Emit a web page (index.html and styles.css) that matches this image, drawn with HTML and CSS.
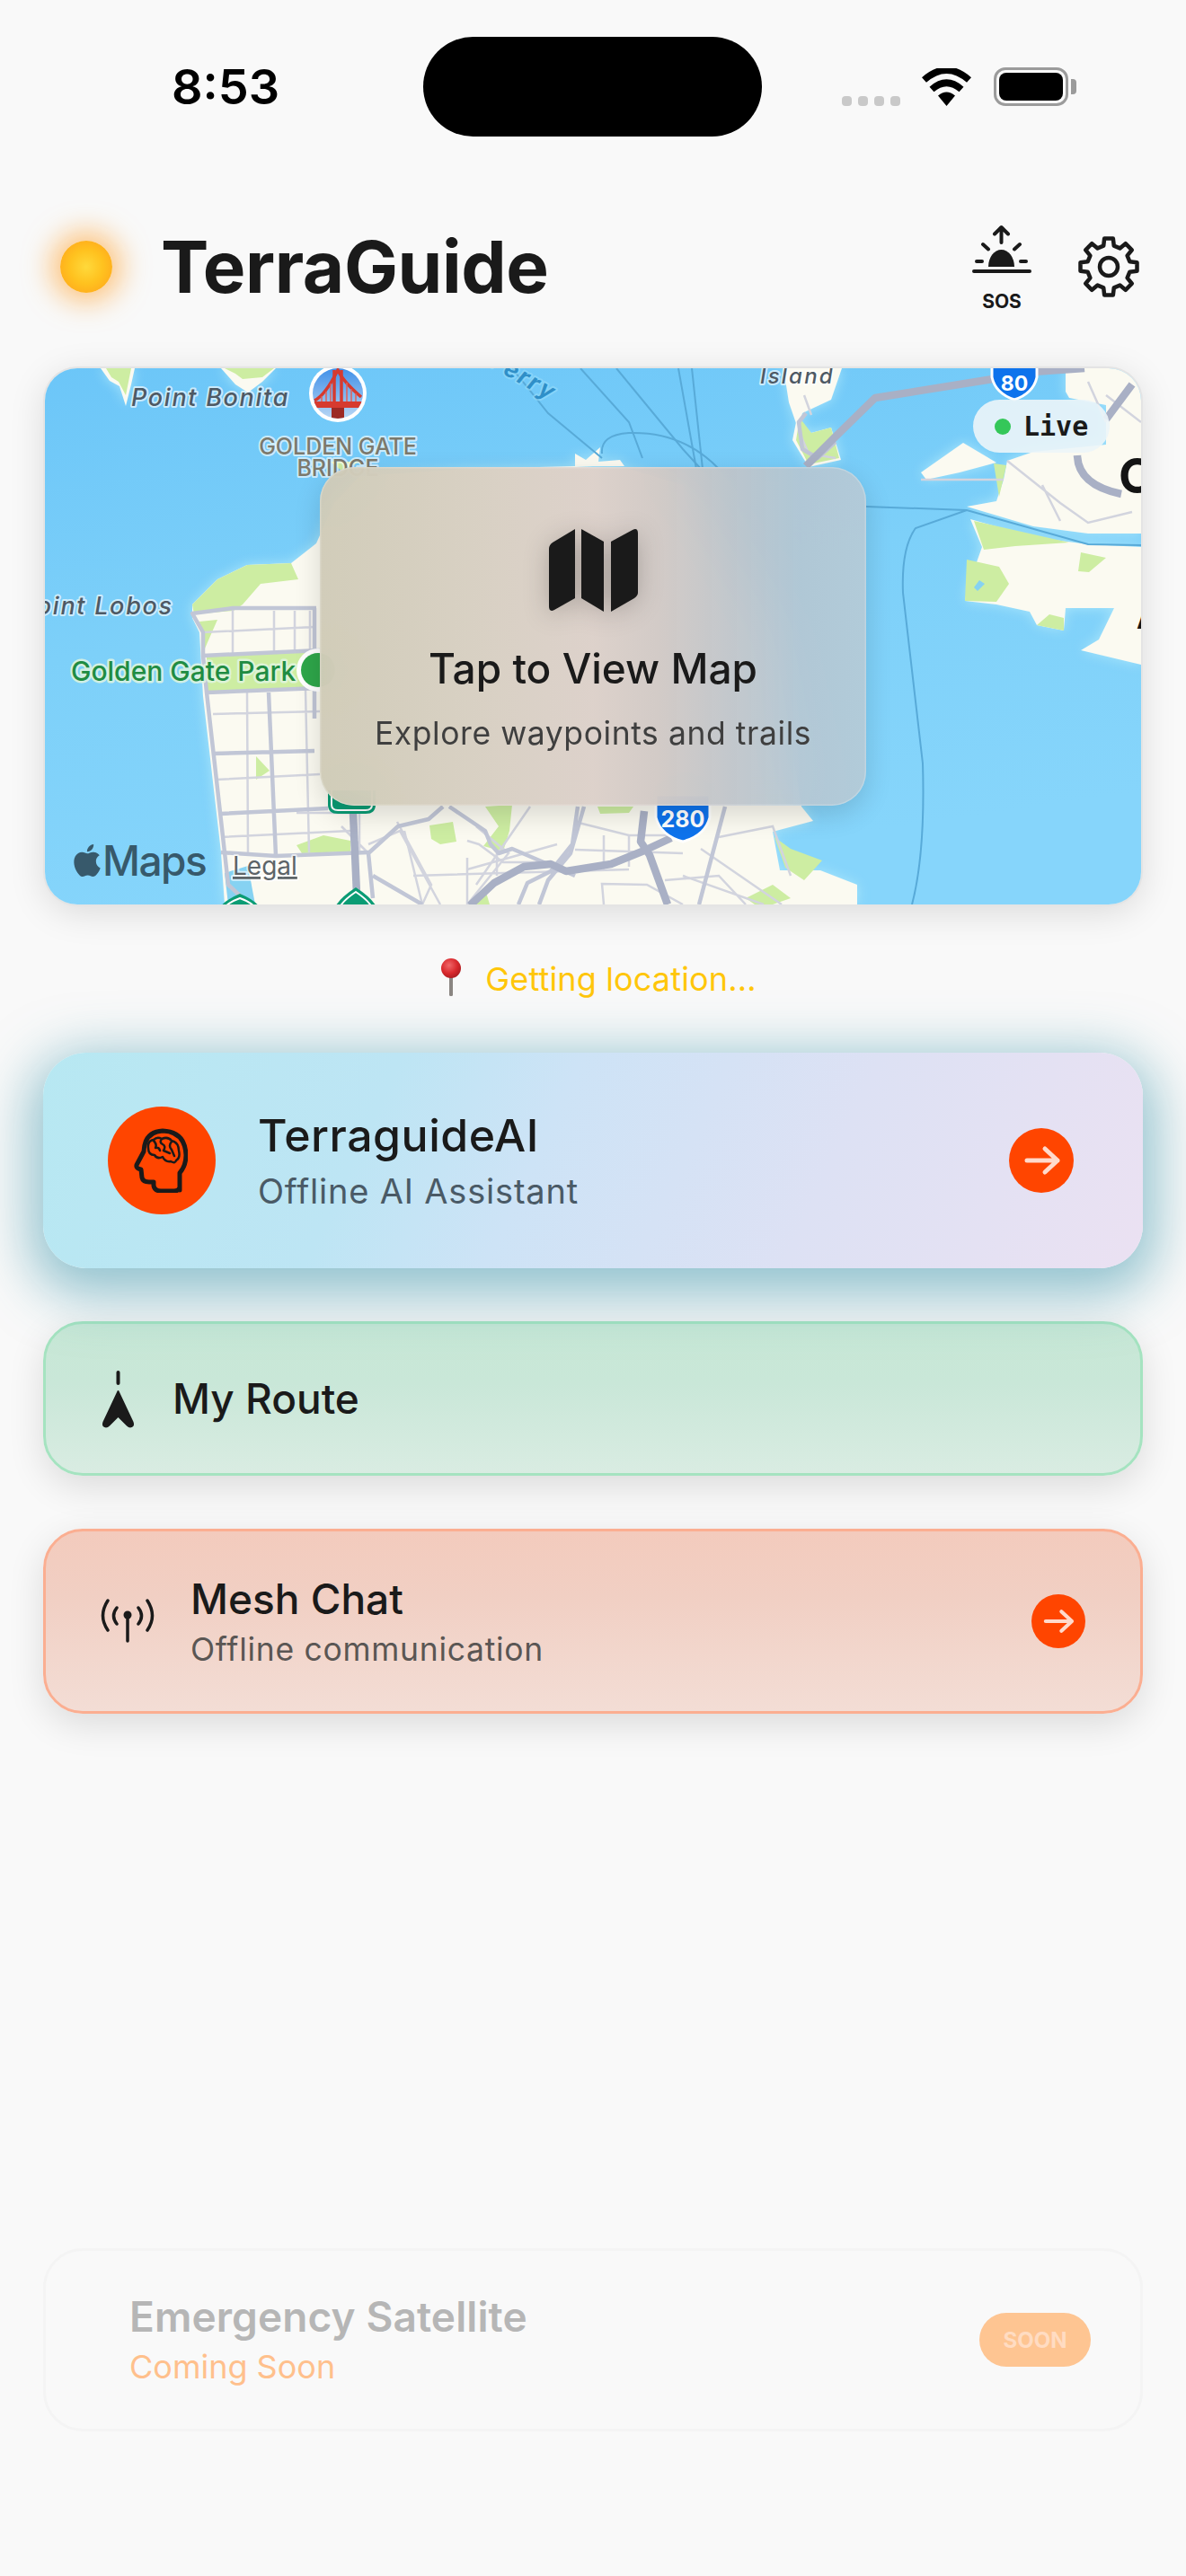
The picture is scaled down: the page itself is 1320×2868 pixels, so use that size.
FILE: index.html
```html
<!DOCTYPE html>
<html lang="en">
<head>
<meta charset="utf-8">
<title>TerraGuide</title>
<link rel="stylesheet" href="styles.css">
</head>
<body>
<div class="screen">
  <div class="status">
    <div class="time">8:53</div>
    <div class="island"></div>
    <div class="indicators">
      <div class="dots"><i></i><i></i><i></i><i></i></div>
      <svg class="wifi" viewBox="0 0 57 42"><path class="wifi-s" d="M3.500 13Q28.500 -9 53.500 13"/><path class="wifi-s" d="M12 23.500Q28.500 9 45 23.500"/><path d="M28.500 42L19 30.500Q28.500 22.500 38 30.500Z"/></svg>
      <div class="battery"><div class="battery-fill"></div></div>
      <div class="battery-nub"></div>
    </div>
  </div>

  <header class="header">
    <div class="orb"></div>
    <h1 class="brand">TerraGuide</h1>
    <div class="sos">
      <svg class="sos-icon" viewBox="0 0 68 56"><path d="M3 52H65M6 41H12M55 41H61M13 22L19 27.500M54 22L48 27.500M33.500 20V3M26 10.500L33.500 3L41 10.500"/><path class="solid" d="M19 47a14.500 19 0 0 1 29 0z"/></svg>
      <span class="sos-label">SOS</span>
    </div>
    <svg class="gear" viewBox="-36 -36 72 72"><path d="M-5.800 -23.300L-4.850 -31.500L4.850 -31.500L5.800 -23.300L12.400 -20.600L18.700 -25.800L25.800 -18.700L20.600 -12.400L23.300 -5.800L31.500 -4.850L31.500 4.850L23.300 5.800L20.600 12.400L25.800 18.700L18.700 25.800L12.400 20.600L5.800 23.300L4.850 31.500L-4.850 31.500L-5.800 23.300L-12.400 20.600L-18.700 25.800L-25.800 18.700L-20.600 12.400L-23.300 5.800L-31.500 4.850L-31.500 -4.850L-23.300 -5.800L-20.600 -12.400L-25.800 -18.700L-18.700 -25.800L-12.400 -20.600Z"/><circle r="10"/></svg>
  </header>

  <section class="map">
    <svg class="map-art" viewBox="50 410 1220 597" preserveAspectRatio="none">
      <defs>
        <linearGradient id="water" x1="0" y1="0" x2="0.3" y2="1"><stop offset="0" stop-color="#6cc6f8"/><stop offset=".5" stop-color="#7dd0f9"/><stop offset="1" stop-color="#86d5fb"/></linearGradient>
        <linearGradient id="sky" x1="0" y1="0" x2="0" y2="1"><stop offset="0" stop-color="#3d8ee8"/><stop offset="1" stop-color="#bcd9f5"/></linearGradient>
        <clipPath id="pinclip"><circle cx="376" cy="438" r="28"/></clipPath>
      </defs>
      <rect x="50" y="410" width="1220" height="597" fill="url(#water)"/>

      <g class="land">
        <path d="M214 673L242 645L275 629L324 627L352 605L372 560L400 530L520 522L640 519L700 522L760 540L860 700L892 898L905 914L860 926L868 969L913 969L954 985L954 1007L250 1007L246 949L242 914L226 775L222 704L214 688Z"/>
        <path d="M112 410H150L146 428L140 452L133 430L122 424Z"/>
        <path d="M246 410H307L292 425L276 437L262 428Z"/>
        <path d="M872 410H937L925 445L893 460L889 480L878 448Z"/>
        <path d="M1186 410H1270V594H1211L1150 586L1076 564L1109 558L1117 534L1121 513L1150 503L1231 495V451L1190 443L1186 436Z"/>
        <path d="M1025 526L1072 493L1109 515L1068 526L1031 534Z"/>
        <path d="M1080 578L1093 609L1076 657L1074 669L1109 673L1146 681L1154 696L1184 702L1186 677L1240 677L1223 712L1203 724L1270 740V609L1211 606L1150 598Z"/>
        <path d="M640 519L640 505L652 512L668 498L666 514L690 512L695 519Z"/>
        <path d="M886 470L903 482L925 476L936 512L900 520L882 490Z"/>
      </g>
      <g class="park">
        <path d="M214 673L242 645L275 629L324 627L332 645L290 650L270 673L260 680L216 684Z"/>
        <path d="M222 692L242 690L228 722Z"/>
        <path d="M230 730L356 724V766L230 771Z"/>
        <path d="M118 410H146L140 440L132 425L124 420Z"/>
        <path d="M250 410H305L292 420L270 422L262 416Z"/>
        <path d="M368 514L400 514L380 524Z"/>
        <path d="M890 465L903 482L925 476L934 510L900 517L886 490Z"/>
        <path d="M1084 580L1190 604L1130 608L1095 612Z"/>
        <path d="M1076 623L1112 631L1123 650L1109 670L1074 669Z"/>
        <path d="M1203 615L1231 621L1212 637L1200 636Z"/>
        <path d="M1154 696L1168 684L1184 688L1184 702Z"/>
        <path d="M1106 516L1120 518L1112 553Z"/>
        <path d="M478 919L504 915L508 937L490 940L480 934Z"/>
        <path d="M540 898L570 896L567 925L560 948L538 942L555 920Z"/>
        <path d="M665 898H705L700 905L668 906Z"/>
        <path d="M330 941L360 930L390 936V948L336 950Z"/>
        <path d="M285 842L300 858L285 868Z"/>
        <path d="M862 932L880 945L915 958L895 980L874 966Z"/>
        <path d="M830 1000L860 985L880 1000L860 1007H840Z"/>
        <path d="M520 1007L540 990L545 1007Z"/>
      </g>
      <path class="pond" d="M1090 646L1096 650L1088 658L1084 654Z"/>
      <path class="pond" d="M250 972L276 964L284 1007H254Z"/>

      <g class="ferry">
        <path d="M570 410L610 460L670 510"/>
        <path d="M646 410L700 470L715 510"/>
        <path d="M686 410L760 500L780 522"/>
        <path d="M755 410L775 522"/>
        <path d="M770 410L782 522"/>
        <path d="M670 505Q668 484 700 482Q760 480 800 522"/>
        <path d="M964 564L1076 568L1211 606L1270 607"/>
        <path d="M1076 568L1019 588Q1003 610 1005 660L1027 850Q1030 950 1015 1007"/>
      </g>

      <g class="road-thin">
        <path d="M259 677V728M305 680V728M328 680V726M345 680V724M226 704L350 698"/>
        <path d="M275 771L276 949M340 768L344 949M237 795L356 792M240 868L356 862M246 932L390 925"/>
        <path d="M330 905H400V950M380 920L410 950M410 940L445 925L490 1007M442 915L480 985L470 1007"/>
        <path d="M450 925L470 1007M460 975L700 968M520 936L533 940L560 960L600 960M530 920L566 950L520 1007"/>
        <path d="M520 955V1007M553 950V975M640 915L700 930H760M672 930V970M700 930V965M640 946L760 950"/>
        <path d="M780 945L870 1007M800 932L860 920L880 975M740 980L800 975L830 1007M760 975L850 1007"/>
        <path d="M1025 534L1117 534M1121 513L1180 560L1211 582L1260 570M1160 540L1180 580M1231 440L1270 470M1211 425L1231 470"/>
        <path d="M895 440L903 462M889 480L900 505L930 510"/>
        <path d="M672 1007L670 984L720 985L760 1007"/>
        <path d="M590 898L530 985M520 968L620 940"/>
      </g>
      <g class="road-mid">
        <path d="M352 677H259L214 683L226 704V730L356 724"/>
        <path d="M226 730L230 771L250 949L254 985L270 1000"/>
        <path d="M230 771L356 766M237 839L350 836M246 906L365 900M299 771L307 953M246 949L307 953L410 949"/>
        <path d="M350 677V800"/>
        <path d="M410 950L443 920L477 912L493 898M410 950L415 1000M415 975L470 1007"/>
        <path d="M500 898L540 925L546 940L555 950L570 945L640 975"/>
        <path d="M807 898L778 1007"/>
        <path d="M577 1007L587 983L613 970L637 940L643 898M600 1007L610 980L635 950L650 898"/>
        <path d="M897 460L889 470L893 500L910 510L930 492"/>
      </g>
      <g class="road-high">
        <path d="M897 519L929 487L974 443L1105 422L1150 414L1207 410"/>
        <path d="M523 1008L550 983L583 965L613 962L630 970L680 962L717 947L747 933"/>
        <path d="M717 903L713 937L723 952L743 1007"/>
        <path d="M393 905L397 995"/>
        <path d="M1199 507Q1200 540 1248 550M1231 467L1260 428"/>
      </g>

      <g class="shield-green">
        <path d="M365 880V896Q365 906 376 906H407Q418 906 418 896V880Z"/>
        <path class="shield-line" d="M369 880V896Q369 902 376 902H407Q414 902 414 896V880"/>
        <path d="M372 1012Q376 1001 396 988Q416 1001 420 1012Z"/>
        <path class="shield-line" d="M377 1012Q381 1003 396 993Q411 1003 415 1012"/>
        <path d="M244 1012Q248 1003 267 995Q286 1003 290 1012Z"/>
        <path class="shield-line" d="M249 1012Q253 1005 267 1000Q281 1005 285 1012"/>
      </g>

      <circle class="gg-pin" cx="354" cy="746" r="24"/>
      <circle class="gg-pin-in" cx="354" cy="746" r="19"/>

      <g>
        <circle cx="376" cy="438" r="32" fill="#fff"/>
        <g clip-path="url(#pinclip)">
          <rect x="346" y="408" width="60" height="60" fill="url(#sky)"/>
          <path class="bridge" d="M350 446Q362 440 376 412Q382 425 402 442"/>
          <path class="bridge" d="M372 412V465M380 412V465"/>
          <path class="bridge-thin" d="M358 441V450M363 436V450M368 427V450M386 426V450M391 433V450M396 438V450"/>
          <rect x="345" y="447" width="62" height="7" fill="#d63a2f"/>
          <rect x="369" y="454" width="14" height="12" fill="#9c2a25"/>
        </g>
      </g>

      <g class="shield-blue">
        <path d="M1104 402H1154V420Q1150 438 1129 445Q1108 438 1104 420Z"/>
        <path d="M730 885H790V910Q785 930 760 937Q735 930 730 910Z"/>
      </g>
      <text class="num" x="1129" y="435" text-anchor="middle">80</text>
      <text class="num num-lg" x="760" y="921" text-anchor="middle">280</text>

      <text class="lbl-it" x="146" y="452">Point Bonita</text>
      <text class="lbl-it" x="22" y="684">Point Lobos</text>
      <text class="lbl-it lbl-island" x="846" y="427">Island</text>
      <text class="lbl-gate" x="376" y="506" text-anchor="middle">GOLDEN GATE</text>
      <text class="lbl-gate" x="376" y="530" text-anchor="middle">BRIDGE</text>
      <text class="lbl-park" x="79" y="758">Golden Gate Park</text>
      <text class="lbl-ferry" transform="translate(544 407) rotate(30)">Ferry</text>
      <text class="lbl-city" x="1245" y="549">O</text>
      <text class="lbl-city lbl-small" x="1265" y="700">A</text>
      <path class="apple" transform="translate(79 940) scale(1.5)" d="M12.152 6.896c-.948 0-2.415-1.078-3.96-1.04-2.04.027-3.91 1.183-4.961 3.014-2.117 3.675-.546 9.103 1.519 12.09 1.013 1.454 2.208 3.09 3.792 3.039 1.52-.065 2.09-.987 3.935-.987 1.831 0 2.35.987 3.96.948 1.637-.026 2.676-1.48 3.676-2.948 1.156-1.688 1.636-3.325 1.662-3.415-.039-.013-3.182-1.221-3.22-4.857-.026-3.04 2.48-4.494 2.597-4.559-1.429-2.09-3.623-2.324-4.39-2.376-2-.156-3.675 1.09-4.61 1.09zM15.53 3.83c.843-1.012 1.4-2.427 1.245-3.83-1.207.052-2.662.805-3.532 1.818-.78.896-1.454 2.338-1.273 3.714 1.338.104 2.715-.688 3.559-1.701"/>
      <text class="maps" x="114" y="975">Maps</text>
      <text class="legal" x="259" y="974">Legal</text>
    </svg>

    <div class="live"><span class="live-dot"></span><span class="live-text">Live</span></div>

    <div class="glass">
      <svg class="map-icon" viewBox="0 0 99 92"><path d="M29 0V77L6 90Q0 93 0 86V22Q0 18 4 15Z"/><path d="M36 0L61 14V92L36 77Z"/><path d="M69 14L93 1Q99 -2 99 5V71Q99 74 95 77L69 92Z"/></svg>
      <div class="glass-title">Tap to View Map</div>
      <div class="glass-sub">Explore waypoints and trails</div>
    </div>
  </section>

  <div class="location">
    <svg class="pin" viewBox="0 0 24 42"><defs><radialGradient id="ball" cx=".4" cy=".35" r=".7"><stop offset="0" stop-color="#f0686a"/><stop offset=".6" stop-color="#d8282c"/><stop offset="1" stop-color="#a81c20"/></radialGradient></defs><rect x="10" y="18" width="4" height="24" rx="1.500" fill="#8b8682"/><circle cx="12" cy="11" r="11" fill="url(#ball)"/></svg>
    <span>Getting location...</span>
  </div>

  <a class="card card-ai">
    <div class="ai-badge">
      <svg class="brain" viewBox="0 0 60 72"><path class="head" d="M51 69V50Q58 42 58 30Q57 4 32 3Q12 4 11 26L3 41Q2 45 8 46L9 55Q10 60 17 60L22 60V64Q23 70 30 70H45Q50 70 51 66"/><path class="lobes" d="M16 22Q15 14 22 13Q26 9 31 12Q38 9 42 14Q50 16 50 25Q52 33 47 36Q46 40 41 37Q35 38 32 32Q26 35 23 30Q16 30 16 22ZM22 14Q26 18 24 22Q28 21 29 25M31 12Q28 16 32 18Q36 20 33 25L40 28M42 15Q38 20 42 24L45 31"/></svg>
    </div>
    <div class="ai-text">
      <div class="ai-title">TerraguideAI</div>
      <div class="ai-sub">Offline AI Assistant</div>
    </div>
    <div class="go go-lg"><svg viewBox="0 0 72 72"><path d="M20 36H54M40 23L54 36L40 49"/></svg></div>
  </a>

  <a class="card card-route">
    <svg class="route-icon" viewBox="0 0 37 65"><path class="route-line" d="M18.500 2V14"/><path d="M18.500 22Q19.500 22 20 24L35.500 57Q37.500 63 32 63.500Q30 63.500 28 61.500L18.500 52L9 61.500Q7 63.500 5 63.500Q-0.500 63 1.500 57L17 24Q17.500 22 18.500 22Z"/></svg>
    <div class="route-title">My Route</div>
  </a>

  <a class="card card-mesh">
    <svg class="mesh-icon" viewBox="0 0 60 50"><path d="M8 2Q-3 19 8 35M52 2Q63 19 52 35M18 10Q11 19 18 28M42 10Q49 19 42 28M30 20V47"/><circle cx="30" cy="18" r="4.500"/></svg>
    <div class="mesh-text">
      <div class="mesh-title">Mesh Chat</div>
      <div class="mesh-sub">Offline communication</div>
    </div>
    <div class="go go-sm"><svg viewBox="0 0 72 72"><path d="M19 36H54M40 23L54 36L40 49"/></svg></div>
  </a>

  <a class="card card-soon">
    <div class="soon-text">
      <div class="soon-title">Emergency Satellite</div>
      <div class="soon-sub">Coming Soon</div>
    </div>
    <div class="soon-badge">SOON</div>
  </a>
</div>
</body>
</html>
```

FILE: styles.css
```css
* { box-sizing: border-box; }
html, body { margin: 0; padding: 0; }
body { background: #f9f9f9; font-family: Inter, "Liberation Sans", sans-serif; color: #1a1a1a; }
.screen { width: 1320px; height: 2868px; overflow: hidden; padding: 41px 48px 161px; display: flex; flex-direction: column; }

/* status bar */
.status { height: 111px; display: flex; align-items: center; margin-left: 143px; flex: none; }
.time { width: 280px; font-size: 54px; font-weight: 600; color: #000; line-height: 1; }
.island { width: 377px; height: 111px; border-radius: 56px; background: #000; flex: none; }
.indicators { margin-left: 89px; height: 43px; display: flex; align-items: flex-end; }
.dots { display: flex; gap: 7px; width: 65px; }
.dots i { width: 11px; height: 11px; border-radius: 4px; background: #c9c9c9; display: block; }
.wifi { width: 57px; height: 42px; margin-left: 23px; fill: #000; display: block; }
.wifi-s { fill: none; stroke: #000; stroke-width: 7.5; }
.battery { width: 83px; height: 43px; margin-left: 24px; border: 3px solid #9b9b9b; border-radius: 13px; padding: 3px; }
.battery-fill { height: 100%; background: #000; border-radius: 8px; }
.battery-nub { width: 6px; height: 17px; margin: 0 0 13px 3px; background: #9b9b9b; border-radius: 0 4px 4px 0; }

/* header */
.header { height: 130px; margin-top: 80px; display: flex; align-items: center; flex: none; }
.orb { width: 58px; height: 58px; border-radius: 50%; margin-left: 19px; background: radial-gradient(circle, #ffd93b 0%, #ffc21f 45%, #ff9f1a 100%); box-shadow: 0 0 30px 11px rgba(255, 165, 55, .6); flex: none; }
.brand { margin: 0 0 0 54px; font-size: 80px; font-weight: 700; letter-spacing: -0.4px; line-height: 1; color: #1a1a1a; flex: 1; }
.sos { width: 68px; margin-right: 49px; display: flex; flex-direction: column; align-items: center; margin-top: 3px; }
.sos-icon { width: 68px; height: 56px; fill: none; stroke: #1a1a1a; stroke-width: 4; stroke-linecap: round; stroke-linejoin: round; display: block; }
.sos-icon .solid { fill: #1a1a1a; stroke: none; }
.sos-label { font-size: 21px; font-weight: 700; line-height: 24px; margin-top: 18px; color: #1a1a1a; }
.gear { width: 72px; height: 72px; margin-right: 2px; fill: none; stroke: #1a1a1a; stroke-width: 4.500; stroke-linejoin: round; flex: none; }

/* map */
.map { position: relative; height: 597px; margin: 48px 2px 0; border-radius: 36px; overflow: hidden; box-shadow: 0 0 0 2px #e4e4e4, 0 8px 40px rgba(0, 0, 0, .13); flex: none; }
.map-art { display: block; width: 1220px; height: 597px; }
.land { fill: #fbfaf1; filter: drop-shadow(0 0 7px #a9e5fb); }
.park { fill: #cdeda2; }
.pond { fill: #86d2f2; }
.ferry { fill: none; stroke: #58aad8; stroke-width: 2; }
.road-thin { fill: none; stroke: #d2d4de; stroke-width: 2.500; }
.road-mid { fill: none; stroke: #c1c6d6; stroke-width: 4.500; stroke-linejoin: round; }
.road-high { fill: none; stroke: #a9b0c5; stroke-width: 8.500; stroke-linejoin: round; }
.shield-green { fill: #0a9c74; }
.shield-line { fill: none; stroke: #fff; stroke-width: 2; }
.gg-pin { fill: #fff; }
.gg-pin-in { fill: #2ea64a; }
.bridge { fill: none; stroke: #d63a2f; stroke-width: 3.500; }
.bridge-thin { fill: none; stroke: #e0605a; stroke-width: 1.500; }
.shield-blue { fill: #0e73ec; stroke: #fff; stroke-width: 3; }
.num { font: 700 23px Inter, sans-serif; fill: #fff; }
.num-lg { font-size: 25px; }
.lbl-it, .lbl-gate, .lbl-park, .lbl-ferry, .legal { paint-order: stroke; stroke: rgba(255, 255, 255, .65); stroke-width: 4px; stroke-linejoin: round; }
.lbl-it { font: italic 500 27px Inter, sans-serif; fill: #4e5964; letter-spacing: 1.7px; }
.lbl-island { font-size: 24px; letter-spacing: 2.2px; }
.lbl-gate { font: 500 25px Inter, sans-serif; fill: #7c796c; }
.lbl-park { font: 500 30px Inter, sans-serif; fill: #1f8c42; stroke: rgba(225, 245, 225, .85); stroke-width: 5px; }
.lbl-ferry { font: italic 700 26px Inter, sans-serif; fill: #2f8fc8; letter-spacing: 2.500px; stroke: rgba(150, 220, 250, .6); }
.lbl-city { font: 700 54px Inter, sans-serif; fill: #141414; }
.lbl-small { font-size: 30px; }
.apple { fill: #37596b; }
.maps { font: 500 46px Inter, sans-serif; fill: #37596b; letter-spacing: -1.5px; }
.legal { font: 400 28px Inter, sans-serif; fill: #5d6468; text-decoration: underline; }

.live { position: absolute; right: 35px; top: 35px; width: 152px; height: 59px; border-radius: 30px; background: rgba(236, 245, 248, .9); display: flex; align-items: center; padding-left: 24px; }
.live-dot { width: 18px; height: 18px; border-radius: 50%; background: #34c759; flex: none; }
.live-text { margin-left: 14px; font: 700 30px "DejaVu Sans Mono", monospace; color: #1a1a1a; }

.glass { position: absolute; left: 306px; top: 110px; width: 608px; height: 377px; border-radius: 38px; background: linear-gradient(90deg, rgba(207, 202, 182, .95) 0%, rgba(214, 206, 192, .95) 28%, rgba(219, 207, 200, .95) 50%, rgba(208, 200, 196, .95) 62%, rgba(191, 196, 201, .94) 75%, rgba(180, 198, 210, .92) 88%, rgba(182, 202, 214, .92) 100%); backdrop-filter: blur(30px); box-shadow: 0 10px 30px rgba(0, 0, 0, .14), inset 0 0 0 1.500px rgba(255, 255, 255, .2); display: flex; flex-direction: column; align-items: center; padding-top: 69px; }
.map-icon { width: 99px; height: 92px; fill: #1a1a1a; filter: drop-shadow(0 4px 14px rgba(0, 0, 0, .22)); flex: none; }
.glass-title { font-size: 46px; font-weight: 500; line-height: 56px; margin-top: 35px; color: #1a1a1a; }
.glass-sub { font-size: 35.500px; font-weight: 400; line-height: 44px; margin-top: 23px; letter-spacing: 0.57px; color: #3f3f3f; }

/* location */
.location { height: 50px; margin-top: 58px; padding-left: 12px; display: flex; align-items: center; justify-content: center; color: #ffc60a; font-size: 36px; letter-spacing: 0.15px; flex: none; }
.pin { width: 24px; height: 42px; margin-right: 26px; margin-top: -4px; flex: none; }

/* cards */
.card { display: flex; align-items: center; flex: none; }
.card-ai { height: 240px; margin-top: 57px; border-radius: 48px; padding: 0 77px 0 72px; background: linear-gradient(115deg, #b7e8f2 0%, #bde5f4 30%, #cde3f6 45%, #dde1f4 70%, #ebe1f2 100%); box-shadow: 0 16px 60px 14px rgba(60, 150, 172, .55); position: relative; z-index: 1; }
.ai-badge { width: 120px; height: 120px; border-radius: 50%; background: #ff4500; display: flex; align-items: center; justify-content: center; flex: none; }
.brain { width: 60px; height: 72px; fill: none; stroke: #1a1a1a; stroke-linejoin: round; stroke-linecap: round; margin-left: -2px; }
.head { stroke-width: 5; }
.lobes { stroke-width: 2.500; }
.ai-text { margin-left: 47px; flex: 1; }
.ai-title { font-size: 50px; font-weight: 500; line-height: 62px; letter-spacing: 0.5px; color: #1a1a1a; }
.ai-sub { font-size: 38px; line-height: 50px; margin-top: 6px; letter-spacing: 0.8px; color: #4a5a66; }
.go { border-radius: 50%; background: #ff4500; flex: none; }
.go svg { display: block; width: 100%; height: 100%; fill: none; stroke: rgba(255, 255, 255, .8); stroke-width: 5; stroke-linecap: round; stroke-linejoin: round; }
.go-lg { width: 72px; height: 72px; }
.go-sm { width: 60px; height: 60px; }

.card-route { height: 172px; margin-top: 59px; border-radius: 44px; border: 3px solid #a5e3c0; padding-left: 62px; background: linear-gradient(180deg, #c8e8d6 0%, #c9e7d8 40%, #d9ece2 100%); box-shadow: 0 12px 40px rgba(0, 0, 0, .12); }
.route-icon { width: 37px; height: 65px; fill: #1a1a1a; margin-top: 3px; flex: none; }
.route-line { fill: none; stroke: #1a1a1a; stroke-width: 4; stroke-linecap: round; }
.route-title { margin-left: 42px; font-size: 46px; font-weight: 500; line-height: 56px; }

.card-mesh { height: 206px; margin-top: 59px; border-radius: 44px; border: 3px solid #fbae91; padding: 0 61px 0 61px; background: linear-gradient(180deg, #f3cbbd 0%, #f1cfc3 35%, #f3ddd5 100%); box-shadow: 0 12px 40px rgba(0, 0, 0, .12); }
.mesh-icon { width: 60px; height: 50px; fill: #1a1a1a; flex: none; }
.mesh-icon path { fill: none; stroke: #1a1a1a; stroke-width: 3.500; stroke-linecap: round; }
.mesh-text { margin-left: 40px; flex: 1; }
.mesh-title { font-size: 46px; font-weight: 500; line-height: 60px; }
.mesh-sub { font-size: 35.500px; line-height: 48px; margin-top: 3px; letter-spacing: 0.7px; color: #5a5654; }

.card-soon { height: 204px; margin-top: auto; border-radius: 44px; border: 3px solid #f4f4f4; padding: 0 55px 0 93px; justify-content: space-between; }
.soon-title { font-size: 46px; font-weight: 600; line-height: 58px; letter-spacing: 0.1px; color: #b6b6b6; }
.soon-sub { font-size: 36px; line-height: 50px; margin-top: 2px; color: #ffc08c; }
.soon-badge { width: 124px; height: 60px; border-radius: 30px; background: #fec592; color: #ffdcc2; font: 700 24px Inter, sans-serif; display: flex; align-items: center; justify-content: center; }
```
